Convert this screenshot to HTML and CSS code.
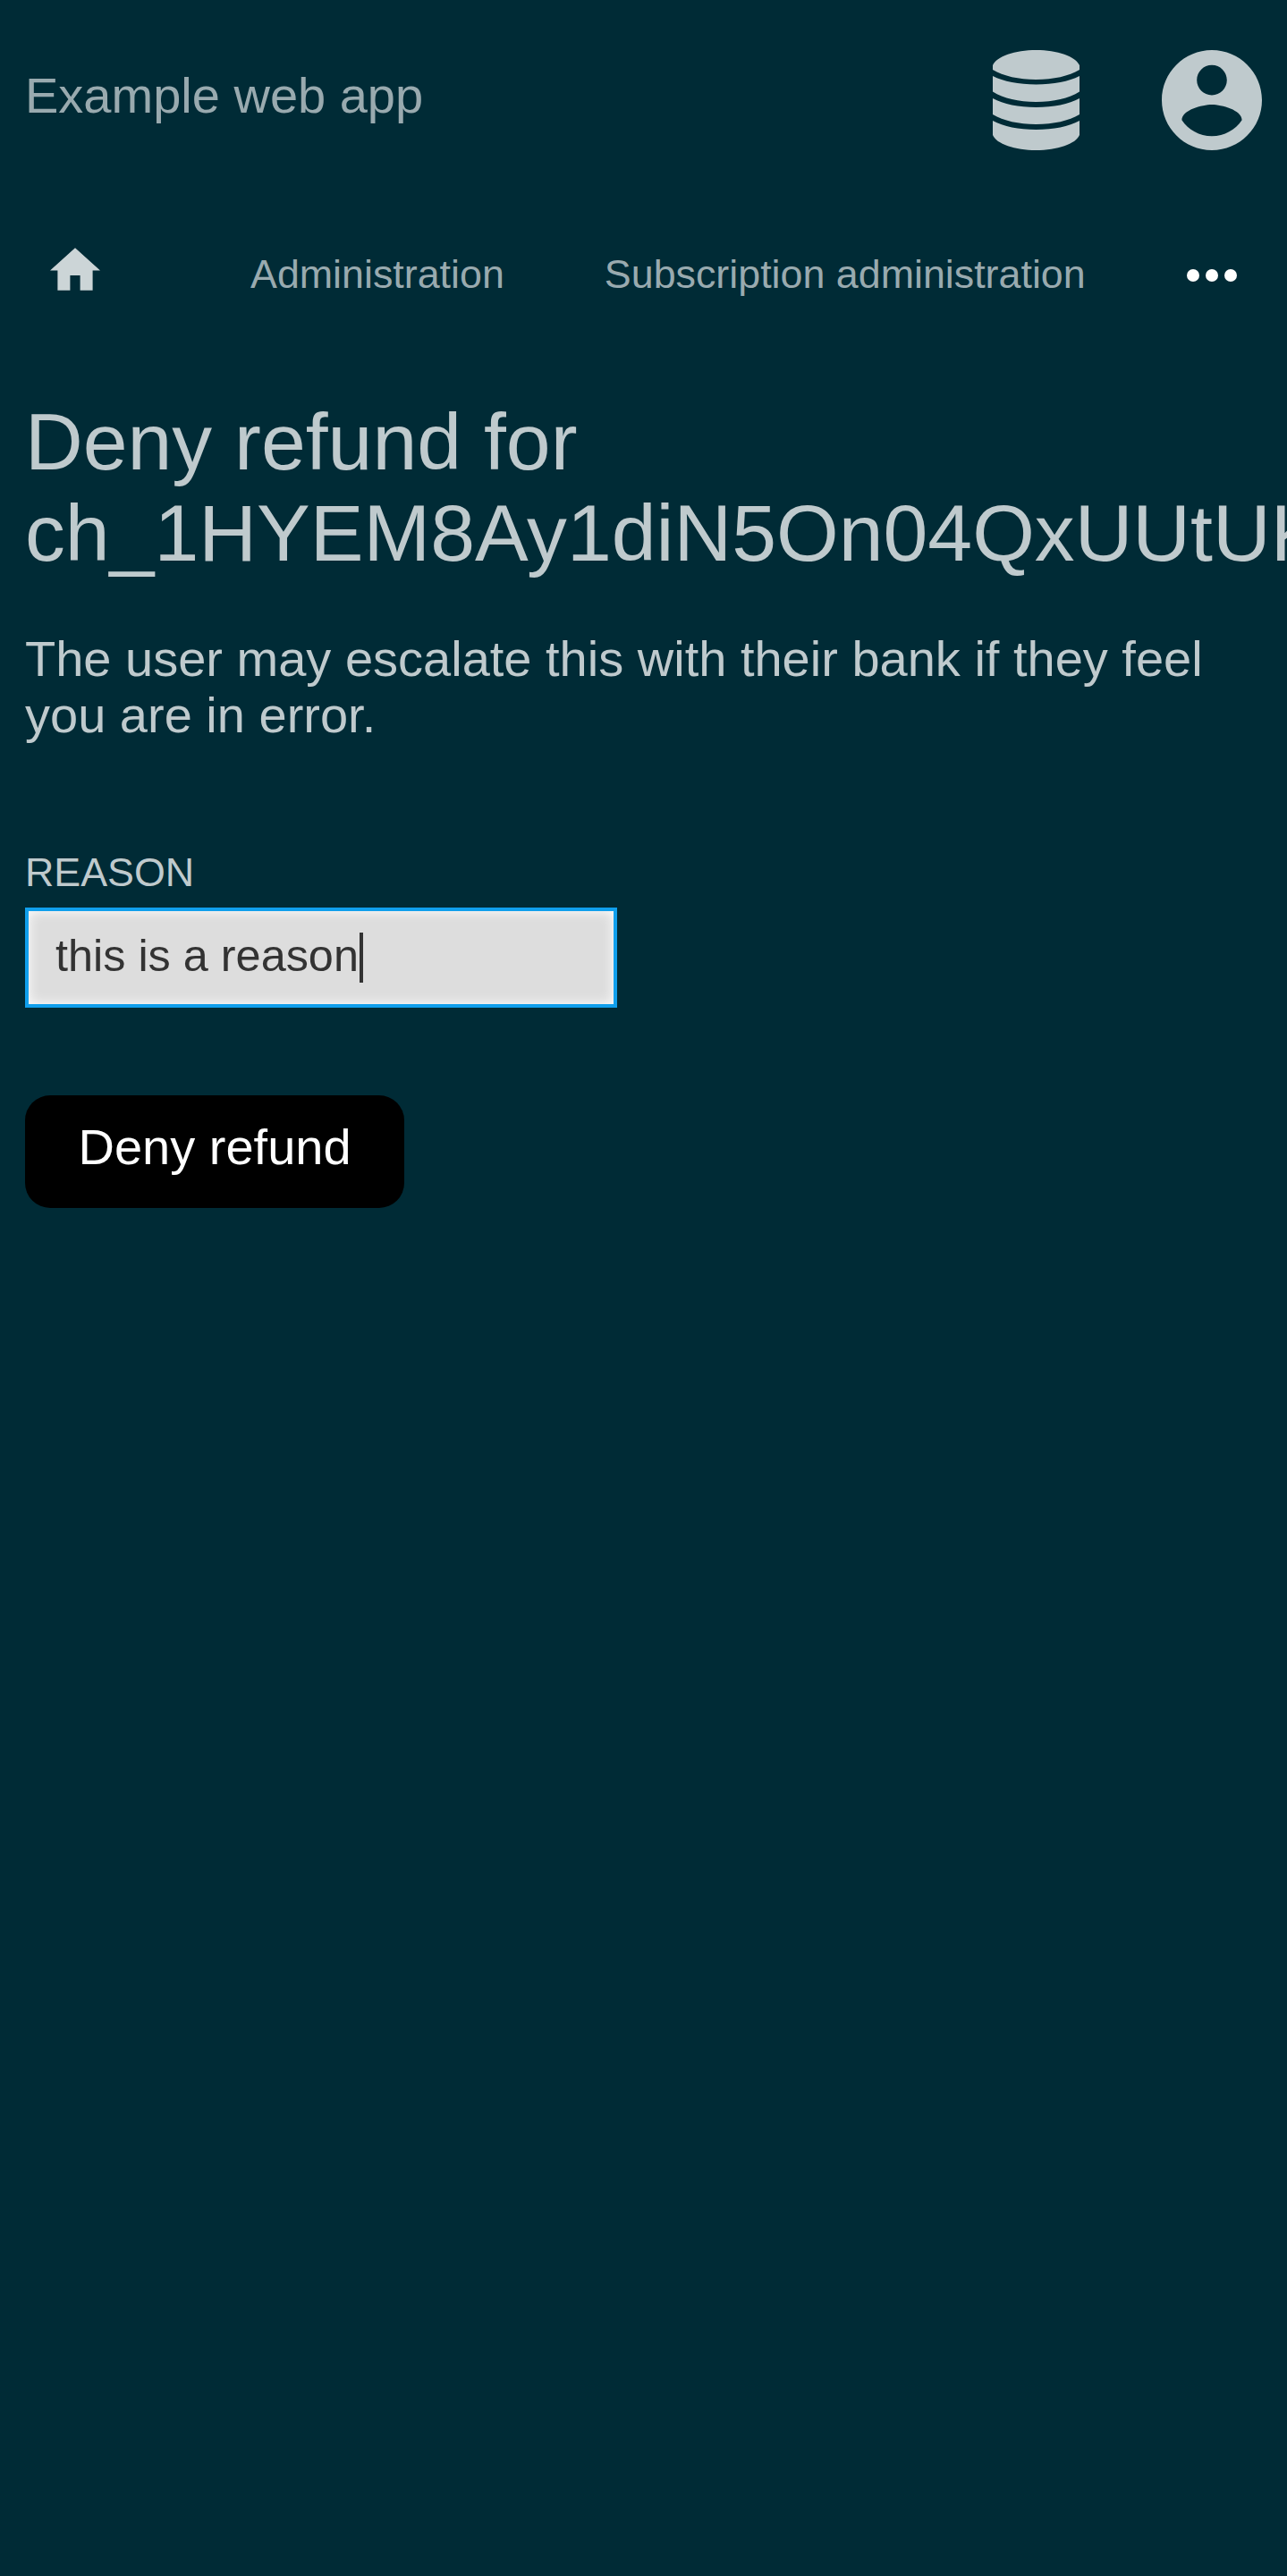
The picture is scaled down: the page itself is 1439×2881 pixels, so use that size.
FILE: index.html
```html
<!DOCTYPE html>
<html lang="en">
<head>
<meta charset="utf-8">
<title>Deny refund</title>
<link rel="stylesheet" href="styles.css">
</head>
<body>
<header class="header">
  <a class="brand">Example web app</a>
  <div class="header-icons">
    <svg class="icon-db" viewBox="0 0 97 112"><path d="M0 17C4 7 25 0 48.500 0S93 7 97 17V22C85 29 68 33 48.500 33S12 29 0 22ZM0 29C12 35 29 38.500 48.500 38.500S85 35 97 29V46.500C85 54 68 58 48.500 58S12 54 0 46.500ZM0 54C12 60.500 29 64 48.500 64S85 60.500 97 54V72C85 79 68 83 48.500 83S12 79 0 72ZM0 79C12 85.500 29 89 48.500 89S85 85.500 97 79V95C93 105 72 112 48.500 112S4 105 0 95Z"/></svg>
    <svg class="icon-user" viewBox="2 2 20 20"><path d="M12 2C6.480 2 2 6.480 2 12s4.480 10 10 10 10-4.480 10-10S17.520 2 12 2zm0 3c1.660 0 3 1.340 3 3s-1.340 3-3 3-3-1.340-3-3 1.340-3 3-3zm0 14.200c-2.500 0-4.710-1.280-6-3.220.030-1.990 4-3.080 6-3.080 1.990 0 5.970 1.090 6 3.080-1.290 1.940-3.500 3.220-6 3.220z"/></svg>
  </div>
</header>
<nav class="nav">
  <svg class="icon-home" viewBox="2 3 20 17"><path d="M10 20v-6h4v6h5v-8h3L12 3 2 12h3v8z"/></svg>
  <a class="nav-link">Administration</a>
  <a class="nav-link">Subscription administration</a>
  <svg class="icon-more" viewBox="4 10 16 4"><circle cx="6" cy="12" r="2"/><circle cx="12" cy="12" r="2"/><circle cx="18" cy="12" r="2"/></svg>
</nav>
<main class="content">
  <h1 class="title">Deny refund for ch_1HYEM8Ay1diN5On04QxUUtUK</h1>
  <p class="text">The user may escalate this with their bank if they feel you are in error.</p>
  <form class="form">
    <label class="label">REASON</label>
    <div class="input"><span class="value">this is a reason</span><span class="caret"></span></div>
    <button class="button" type="button">Deny refund</button>
  </form>
</main>
</body>
</html>
```

FILE: styles.css
```css
* { box-sizing: border-box; }
html { background: #002b36; }
body {
  margin: 0;
  min-height: 2881px;
  overflow: hidden;
  background: #002b36;
  color: #bfcacd;
  font: 56px/63px "Liberation Sans", Arial, sans-serif;
}
svg { display: block; flex: none; fill: currentColor; }
.header {
  display: flex;
  justify-content: space-between;
  height: 224px;
  padding: 56px 28px 0;
}
.brand { padding-top: 19px; color: #99aaaf; }
.header-icons { display: flex; gap: 92px; }
.icon-db { width: 97px; height: 112px; }
.icon-user { width: 112px; height: 112px; }
.nav {
  display: flex;
  align-items: flex-start;
  height: 219px;
  padding: 53px 56px 0;
  white-space: nowrap;
}
.icon-home { width: 56px; height: 48px; margin-right: 168px; color: #ccd5d7; }
.nav-link {
  margin: 3px 112px 0 0;
  font-size: 44.800px;
  line-height: 52px;
  color: #99aaaf;
}
.icon-more { width: 56px; height: 14px; margin: 24px 0 0 1px; color: #fff; }
.content { padding: 0 28px; }
.title {
  margin: 0;
  font-size: 89.600px;
  line-height: 102px;
  font-weight: 400;
}
.text { margin: 58px 0 0; }
.form {
  display: flex;
  flex-direction: column;
  align-items: flex-start;
  padding-top: 118px;
}
.label { font-size: 44.800px; line-height: 52px; }
.input {
  display: flex;
  align-items: center;
  width: 662px;
  height: 112px;
  margin-top: 14px;
  padding: 0 30px;
  border: 4px solid #109fec;
  background: #ddd;
  box-shadow: inset 0 0 14px #fff;
  color: #333;
  font-size: 50.400px;
  line-height: 56px;
}
.value { padding-bottom: 5px; }
.caret { width: 4px; height: 56px; margin-left: 1px; background: #333; }
.button {
  height: 126px;
  margin-top: 98px;
  padding: 0 59.500px 12px;
  border: 0;
  border-radius: 28px;
  background: #000;
  color: #fff;
  font: inherit;
}
```
